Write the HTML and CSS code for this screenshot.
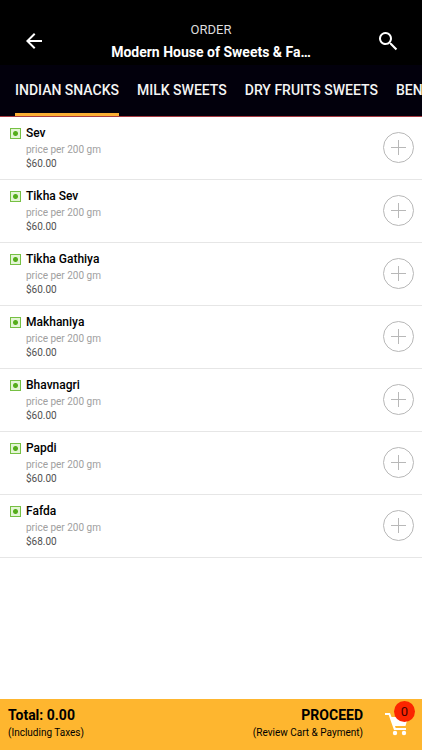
FILE: index.html
```html
<!DOCTYPE html>
<html lang="en">
<head>
<meta charset="utf-8">
<meta name="viewport" content="width=device-width, initial-scale=1">
<title>Order</title>
<link rel="stylesheet" href="styles.css">
</head>
<body>
<header class="topbar">
  <button class="icon-button" type="button" aria-label="Back">
    <svg width="24" height="24" viewBox="0 0 24 24" fill="currentColor"><path d="M20 11H7.83l5.59-5.59L12 4l-8 8 8 8 1.410-1.410L7.830 13H20z"/></svg>
  </button>
  <div class="heading">
    <div class="eyebrow">ORDER</div>
    <h1 class="title">Modern House of Sweets &amp; Fa…</h1>
  </div>
  <button class="icon-button" type="button" aria-label="Search">
    <svg width="24" height="24" viewBox="0 0 24 24" fill="currentColor"><path d="M15.500 14h-.790l-.280-.270A6.500 6.500 0 1 0 13.730 14.430l.270.280v.790l5.700 5.700 1.500-1.500zM9.500 14a4.500 4.500 0 1 1 0-9 4.500 4.500 0 0 1 0 9z"/></svg>
  </button>
</header>
<nav class="tabs">
  <a class="tab active" href="#indian">INDIAN SNACKS</a>
  <a class="tab" href="#milk">MILK SWEETS</a>
  <a class="tab" href="#dry">DRY FRUITS SWEETS</a>
  <a class="tab" href="#bengali">BENGALI SWEETS</a>
</nav>
<main class="content">
  <ul class="items" id="indian">
    <li class="item"><span class="veg"></span><div class="info"><h2 class="name">Sev</h2><p class="unit">price per 200 gm</p><p class="price">$60.00</p></div><button class="add" type="button" aria-label="Add Sev"></button></li>
    <li class="item"><span class="veg"></span><div class="info"><h2 class="name">Tikha Sev</h2><p class="unit">price per 200 gm</p><p class="price">$60.00</p></div><button class="add" type="button" aria-label="Add Tikha Sev"></button></li>
    <li class="item"><span class="veg"></span><div class="info"><h2 class="name">Tikha Gathiya</h2><p class="unit">price per 200 gm</p><p class="price">$60.00</p></div><button class="add" type="button" aria-label="Add Tikha Gathiya"></button></li>
    <li class="item"><span class="veg"></span><div class="info"><h2 class="name">Makhaniya</h2><p class="unit">price per 200 gm</p><p class="price">$60.00</p></div><button class="add" type="button" aria-label="Add Makhaniya"></button></li>
    <li class="item"><span class="veg"></span><div class="info"><h2 class="name">Bhavnagri</h2><p class="unit">price per 200 gm</p><p class="price">$60.00</p></div><button class="add" type="button" aria-label="Add Bhavnagri"></button></li>
    <li class="item"><span class="veg"></span><div class="info"><h2 class="name">Papdi</h2><p class="unit">price per 200 gm</p><p class="price">$60.00</p></div><button class="add" type="button" aria-label="Add Papdi"></button></li>
    <li class="item"><span class="veg"></span><div class="info"><h2 class="name">Fafda</h2><p class="unit">price per 200 gm</p><p class="price">$68.00</p></div><button class="add" type="button" aria-label="Add Fafda"></button></li>
  </ul>
</main>
<footer class="cartbar">
  <div class="total">
    <div class="strong">Total: 0.00</div>
    <div class="note">(Including Taxes)</div>
  </div>
  <button class="proceed" type="button">
    <span class="proceed-text">
      <span class="strong">PROCEED</span>
      <span class="note">(Review Cart &amp; Payment)</span>
    </span>
    <span class="cart">
      <svg width="26" height="24" viewBox="0 0 26 24" fill="#fff"><path d="M1 1h5l1.500 4H24l-2.500 9H11l.700 2H22v2H10L4.700 3H1z"/><circle cx="11" cy="21" r="2.200"/><circle cx="20" cy="21" r="2.200"/></svg>
      <span class="badge">0</span>
    </span>
  </button>
</footer>
</body>
</html>
```

FILE: styles.css
```css
* {
  box-sizing: border-box;
}

body {
  margin: 0;
  min-height: 100vh;
  display: flex;
  flex-direction: column;
  background: #fff;
  color: #000;
  font-family: Roboto, "Liberation Sans", sans-serif;
}

h1, h2, p, ul {
  margin: 0;
  padding: 0;
}

button {
  border: 0;
  padding: 0;
  background: none;
  color: inherit;
  font: inherit;
}

svg {
  display: block;
}

.topbar {
  display: flex;
  align-items: center;
  justify-content: space-between;
  padding: 19px 22px 2px;
  background: #000;
  color: #fff;
}

.icon-button {
  flex: none;
}

.heading {
  min-width: 0;
  text-align: center;
}

.eyebrow {
  font-size: 13px;
  line-height: 22px;
  color: #ddd;
}

.title {
  overflow: hidden;
  font-size: 14px;
  font-weight: 700;
  line-height: 22px;
  white-space: nowrap;
}

.tabs {
  display: flex;
  gap: 18px;
  padding-left: 15px;
  overflow: hidden;
  background: #02000c;
  border-bottom: 1px solid #a83a42;
}

.tab {
  flex: none;
  border-bottom: 3px solid transparent;
  color: #f4f4f4;
  font-size: 14px;
  font-weight: 500;
  line-height: 20px;
  padding: 15px 0 13px;
  text-decoration: none;
}

.tab.active {
  border-color: #fbaf33;
}

.content {
  flex: 1;
}

.items {
  list-style: none;
}

.item {
  display: flex;
  align-items: flex-start;
  gap: 5px;
  padding: 8px 8px 9px 10px;
  border-bottom: 1px solid #e6e6e6;
}

.veg {
  flex: none;
  width: 11px;
  height: 11px;
  margin-top: 3px;
  border: 1px solid #76c043;
  background: radial-gradient(circle, #55ad1c 2px, #e4f5d6 3px);
}

.info {
  flex: 1;
}

.name {
  font-size: 12px;
  font-weight: 500;
  line-height: 17px;
}

.unit {
  color: #a0a0a0;
  font-size: 10px;
  line-height: 15px;
}

.price {
  color: #505050;
  font-size: 10px;
  line-height: 13px;
}

.add {
  flex: none;
  align-self: center;
  width: 31px;
  height: 31px;
  border: 1px solid #b8b8b8;
  border-radius: 50%;
  background:
    linear-gradient(#b8b8b8, #b8b8b8) center / 15px 1px no-repeat,
    linear-gradient(#b8b8b8, #b8b8b8) center / 1px 15px no-repeat;
}

.cartbar {
  display: flex;
  justify-content: space-between;
  padding: 6px 12px 9px 8px;
  background: #feb62f;
}

.strong {
  display: block;
  font-size: 14px;
  font-weight: 700;
  line-height: 20px;
}

.note {
  display: block;
  font-size: 10px;
  line-height: 16px;
}

.proceed {
  display: flex;
  gap: 21px;
  text-align: right;
}

.cart {
  position: relative;
  padding-top: 7px;
}

.badge {
  position: absolute;
  top: -4px;
  right: -5px;
  width: 21px;
  height: 21px;
  border-radius: 50%;
  background: #fb2500;
  color: #400;
  font-size: 13px;
  line-height: 21px;
  text-align: center;
}
```
